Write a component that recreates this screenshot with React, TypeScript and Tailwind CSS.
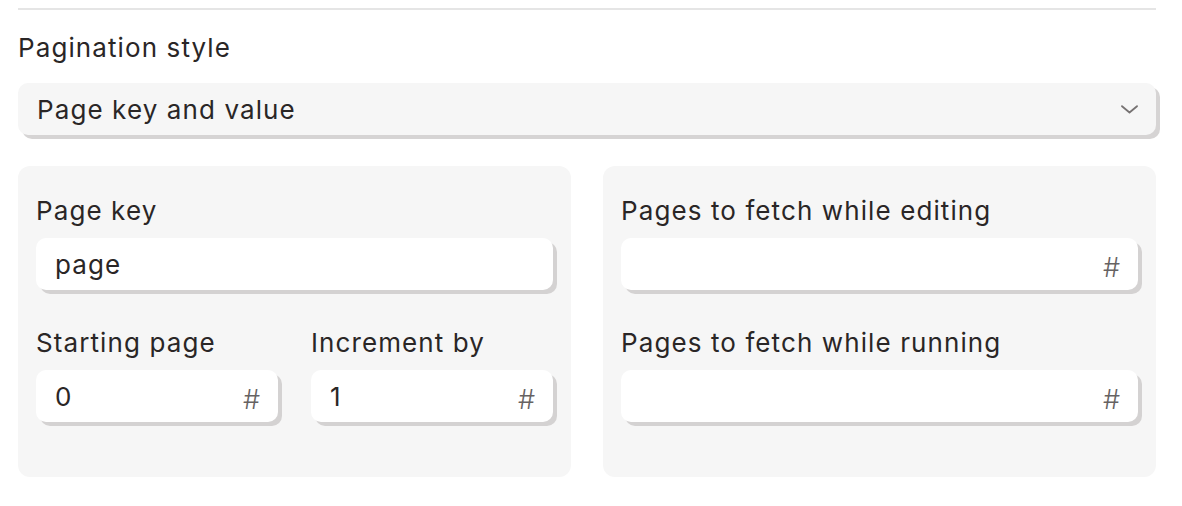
import React from "react";

function NumberInput({ value }: { value?: string }) {
  return (
    <div className="h-[52px] rounded-[10px] bg-white shadow-[4px_4px_0_#d4d2d2] flex items-center justify-between pl-[19px] pr-[18px]">
      <span className="text-[26px] tracking-[1px]">{value}</span>
      <span className="text-[27px] font-light leading-none pt-[6px] text-[#666262]">#</span>
    </div>
  );
}

function Field({ label, children }: { label: string; children: React.ReactNode }) {
  return (
    <div className="flex flex-col">
      <label className="text-[26px] tracking-[1.1px] leading-8 mb-[11px]">{label}</label>
      {children}
    </div>
  );
}

export default function App() {
  return (
    <div className="min-h-screen bg-white font-['Inter',sans-serif] text-[#2a2626] pl-[18px] pr-[26px] pt-2">
      {/* Divider */}
      <div className="h-[2px] bg-[#e5e5e5]" />

      <div className="mt-[22px] text-[26px] tracking-[1.1px] leading-8">Pagination style</div>

      {/* Select */}
      <div className="mt-[19px] h-[52px] rounded-[10px] bg-[#f6f6f6] shadow-[4px_4px_0_#d6d4d4] flex items-center justify-between pl-[19px] pr-[18px]">
        <span className="text-[26px] tracking-[1.1px]">Page key and value</span>
        <svg width="17" height="9" viewBox="0 0 17 9" fill="none">
          <path d="M1 1.2 L8.5 7.5 L16 1.2" stroke="#767272" strokeWidth="1.8" strokeLinecap="round" strokeLinejoin="round" />
        </svg>
      </div>

      <div className="mt-[31px] grid grid-cols-2 gap-8">
        {/* Left panel */}
        <div className="rounded-xl bg-[#f6f6f6] px-[18px] pt-[29px] pb-[55px] flex flex-col gap-[37px]">
          <Field label="Page key">
            <div className="h-[52px] rounded-[10px] bg-white shadow-[4px_4px_0_#d4d2d2] flex items-center pl-[19px]">
              <span className="text-[26px] tracking-[1.1px]">page</span>
            </div>
          </Field>
          <div className="grid grid-cols-2 gap-[33px]">
            <Field label="Starting page">
              <NumberInput value="0" />
            </Field>
            <Field label="Increment by">
              <NumberInput value="1" />
            </Field>
          </div>
        </div>

        {/* Right panel */}
        <div className="rounded-xl bg-[#f6f6f6] px-[18px] pt-[29px] pb-[55px] flex flex-col gap-[37px]">
          <Field label="Pages to fetch while editing">
            <NumberInput />
          </Field>
          <Field label="Pages to fetch while running">
            <NumberInput />
          </Field>
        </div>
      </div>
    </div>
  );
}
